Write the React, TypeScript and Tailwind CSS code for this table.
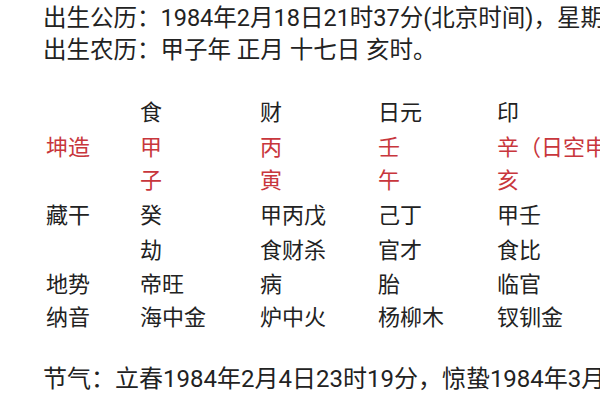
import React from "react";

const RED = "text-[#c8363c]";
const BLK = "text-[#222222]";

const rows: { label: string; red?: boolean; cells: string[]; redCells?: boolean; h: string }[] = [
  { label: "", cells: ["食", "财", "日元", "印"], h: "h-[36px]" },
  { label: "坤造", red: true, cells: ["甲", "丙", "壬", "辛（日空申酉）"], redCells: true, h: "h-[32px]" },
  { label: "", cells: ["子", "寅", "午", "亥"], redCells: true, h: "h-[35px]" },
  { label: "藏干", cells: ["癸", "甲丙戊", "己丁", "甲壬"], h: "h-[36px]" },
  { label: "", cells: ["劫", "食财杀", "官才", "食比"], h: "h-[34px]" },
  { label: "地势", cells: ["帝旺", "病", "胎", "临官"], h: "h-[33px]" },
  { label: "纳音", cells: ["海中金", "炉中火", "杨柳木", "钗钏金"], h: "h-[34px]" },
];

export default function App() {
  return (
    <div
      className={`w-[600px] h-[400px] overflow-hidden bg-white ${BLK} whitespace-nowrap text-[22px]`}
      style={{ fontFamily: '"Roboto", "Noto Sans CJK SC", sans-serif' }}
    >
      <div className="pl-[43px] pt-[2px] leading-[32px] text-[23.5px]">
        <div>出生公历：1984年2月18日21时37分(北京时间)，星期六</div>
        <div>出生农历：甲子年 正月 十七日 亥时。</div>
      </div>
      <div className="pl-[46px] mt-[29px] leading-[34px]">
        {rows.map((r, i) => (
          <div key={i} className={`grid grid-cols-[94px_120px_118px_119px_1fr] items-center ${r.h}`}>
            <div className={r.red ? RED : BLK}>{r.label}</div>
            {r.cells.map((c, j) => (
              <div key={j} className={r.redCells ? RED : BLK}>
                {c}
              </div>
            ))}
          </div>
        ))}
      </div>
      <div className="pl-[43px] mt-[28px] leading-[32px] text-[24px]">
        节气：立春1984年2月4日23时19分，惊蛰1984年3月5日
      </div>
    </div>
  );
}
